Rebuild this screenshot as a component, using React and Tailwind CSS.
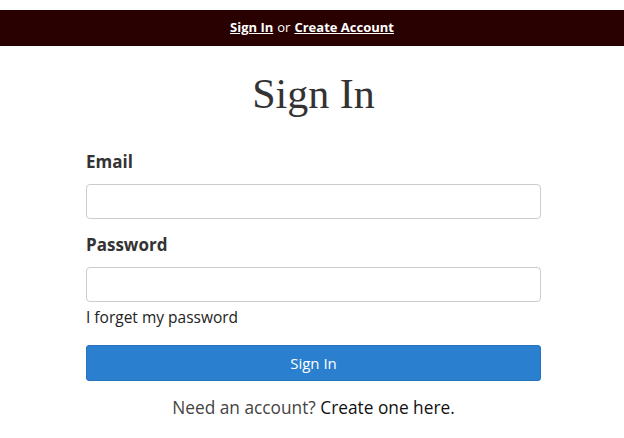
export default function App() {
  return (
    <div className="min-h-[438px] bg-white pt-[10px]" style={{ fontFamily: '"Open Sans", "Noto Sans", sans-serif' }}>
      <div className="flex h-[36px] items-center justify-center bg-[#2a0101] pb-[1px] text-[13px] text-white">
        <a className="font-bold underline">Sign In</a>
        <span className="mx-[4px]">or</span>
        <a className="font-bold underline">Create Account</a>
      </div>
      <div className="ml-[86px] w-[455px]">
        <h1 className="mt-[22px] text-center text-[42px] leading-[52px] text-[#333]" style={{ fontFamily: '"Liberation Serif", serif' }}>Sign In</h1>
        <label className="mt-[31px] block text-[17px] font-bold leading-[22px] text-[#333]">Email</label>
        <input className="mt-[11px] block h-[35px] w-full rounded-[4px] border border-[#ccc]" />
        <label className="mt-[15px] block text-[17px] font-bold leading-[22px] text-[#333]">Password</label>
        <input className="mt-[11px] block h-[35px] w-full rounded-[4px] border border-[#ccc]" />
        <div className="mt-[5px] text-[15.5px] leading-[20px] text-[#222]">I forget my password</div>
        <button className="mt-[18px] block h-[36px] w-full rounded-[3px] border border-[#2572bd] bg-[#2a7fcf] text-[15px] text-white">Sign In</button>
        <div className="mt-[15px] text-center text-[17.3px] leading-[24px] text-[#444]">
          Need an account? <a className="text-[#111]">Create one here.</a>
        </div>
      </div>
    </div>
  );
}
